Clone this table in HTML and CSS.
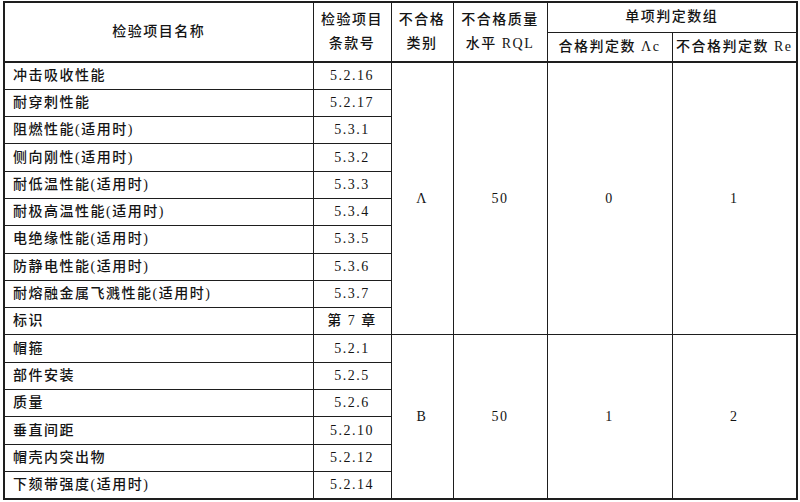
FILE: index.html
```html
<!DOCTYPE html>
<html lang="zh">
<head>
<meta charset="utf-8">
<link rel="stylesheet" href="styles.css">
</head>
<body>
<table class="spec">
  <colgroup>
    <col class="c-name"><col class="c-clause"><col class="c-cat"><col class="c-rql"><col class="c-ac"><col class="c-re">
  </colgroup>
  <thead>
    <tr class="h1">
      <th rowspan="2" class="hb">检验项目名称</th>
      <th rowspan="2" class="hb">检验项目<br>条款号</th>
      <th rowspan="2" class="hb">不合格<br>类别</th>
      <th rowspan="2" class="hb">不合格质量<br>水平 RQL</th>
      <th colspan="2">单项判定数组</th>
    </tr>
    <tr class="h2">
      <th class="hb">合格判定数 Λc</th>
      <th class="hb">不合格判定数 Re</th>
    </tr>
  </thead>
  <tbody>
    <tr><td class="name">冲击吸收性能</td><td>5.2.16</td><td rowspan="10">Λ</td><td rowspan="10">50</td><td rowspan="10">0</td><td rowspan="10">1</td></tr>
    <tr><td class="name">耐穿刺性能</td><td>5.2.17</td></tr>
    <tr><td class="name">阻燃性能(适用时)</td><td>5.3.1</td></tr>
    <tr><td class="name">侧向刚性(适用时)</td><td>5.3.2</td></tr>
    <tr><td class="name">耐低温性能(适用时)</td><td>5.3.3</td></tr>
    <tr><td class="name">耐极高温性能(适用时)</td><td>5.3.4</td></tr>
    <tr><td class="name">电绝缘性能(适用时)</td><td>5.3.5</td></tr>
    <tr><td class="name">防静电性能(适用时)</td><td>5.3.6</td></tr>
    <tr><td class="name">耐熔融金属飞溅性能(适用时)</td><td>5.3.7</td></tr>
    <tr><td class="name">标识</td><td>第 7 章</td></tr>
    <tr><td class="name">帽箍</td><td>5.2.1</td><td rowspan="6">B</td><td rowspan="6">50</td><td rowspan="6">1</td><td rowspan="6">2</td></tr>
    <tr><td class="name">部件安装</td><td>5.2.5</td></tr>
    <tr><td class="name">质量</td><td>5.2.6</td></tr>
    <tr><td class="name">垂直间距</td><td>5.2.10</td></tr>
    <tr><td class="name">帽壳内突出物</td><td>5.2.12</td></tr>
    <tr><td class="name">下颏带强度(适用时)</td><td>5.2.14</td></tr>
  </tbody>
</table>
</body>
</html>
```
FILE: styles.css
```css
html, body {
  margin: 0;
  padding: 0;
  background: #ffffff;
}
body {
  padding: 1px 0 0 3px;
  font-family: "Liberation Serif", "Noto Sans CJK SC", serif;
  color: #141414;
}
.spec {
  border-collapse: collapse;
  table-layout: fixed;
  width: 795px;
  border: 2px solid #1e1e1e;
  font-size: 14px;
}
.c-name { width: 309px; }
.c-clause { width: 78px; }
.c-cat { width: 62px; }
.c-rql { width: 94px; }
.c-ac { width: 125px; }
.c-re { width: 125px; }
.spec th, .spec td {
  border: 1px solid #1e1e1e;
  padding: 0;
  text-align: center;
  vertical-align: middle;
  font-weight: 500;
  letter-spacing: 1.5px;
  line-height: 24px;
  white-space: nowrap;
}
.spec .hb {
  border-bottom: 2px solid #1e1e1e;
}
.h1 { height: 30px; }
.h2 { height: 30px; }
.spec tbody tr { height: 27.3px; }
.spec td.name {
  text-align: left;
  padding-left: 8px;
}
```
